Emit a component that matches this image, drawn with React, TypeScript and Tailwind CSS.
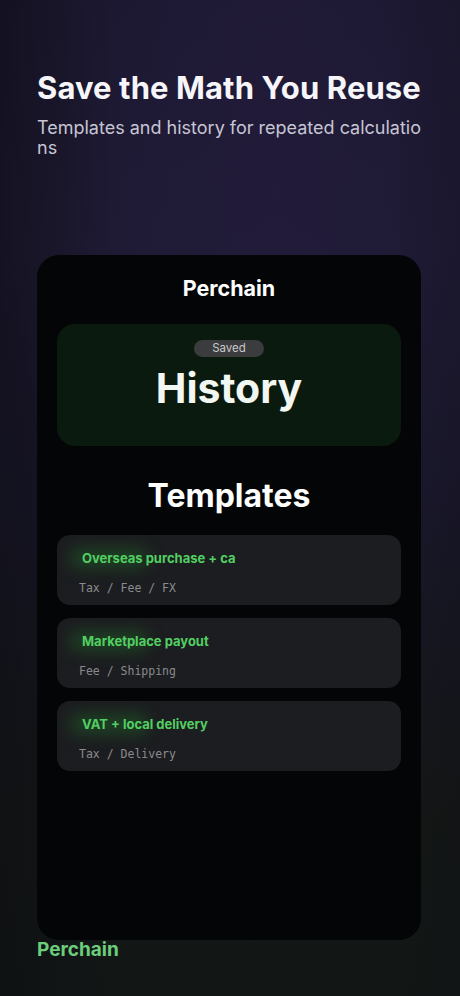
import React from "react";

type Template = { title: string; tags: string };

const templates: Template[] = [
  { title: "Overseas purchase + ca", tags: "Tax / Fee / FX" },
  { title: "Marketplace payout", tags: "Fee / Shipping" },
  { title: "VAT + local delivery", tags: "Tax / Delivery" },
];

function TemplateCard({ t }: { t: Template }) {
  return (
    <div className="relative h-[70px] overflow-hidden rounded-[13px] bg-[#1c1d20] px-[22px] pt-[14px]">
      {/* soft green glow behind the title */}
      <div className="absolute left-[12px] top-[13px] h-[20px] w-[80px] rounded-full bg-[#1f5226] opacity-70 blur-[8px]" />
      <div className="relative pl-[3px] text-[13px] font-bold leading-[18px] text-[#52cf62]">{t.title}</div>
      <div className="relative mt-[13px] font-['DejaVu_Sans_Mono',monospace] text-[11.5px] leading-[16px] text-[#8b8b8e]">
        {t.tags}
      </div>
    </div>
  );
}

export default function App() {
  return (
    <div className="relative h-[996px] w-full overflow-hidden bg-[linear-gradient(180deg,#1c1830_0%,#1e1a33_25%,#19172a_50%,#141716_82%,#121716_100%)] font-['Inter','Liberation_Sans',sans-serif]">
      <div className="pointer-events-none absolute inset-0 bg-[radial-gradient(ellipse_at_60%_15%,rgba(50,35,90,0.18),transparent_55%)]" />
      <div className="pointer-events-none absolute inset-0 bg-[linear-gradient(90deg,rgba(10,10,15,0.45)_0%,transparent_25%,transparent_85%,rgba(10,10,15,0.15)_100%)]" />

      <div className="relative flex flex-col px-[37px] pt-[70px]">
        <h1 className="text-[31px] font-bold leading-[36px] tracking-[0.1px] text-[#f6f5fa]">Save the Math You Reuse</h1>
        <p className="mt-[12px] w-[388px] break-all text-[18px] leading-[20px] text-[#c7c5d4]">
          Templates and history for repeated calculations
        </p>

        <div className="mt-[97px] flex h-[685px] w-[384px] flex-col items-center rounded-[22px] bg-[#040506] px-[20px]">
          <div className="mt-[21px] text-[21.5px] font-bold leading-[24px] text-white">Perchain</div>

          <div className="mt-[24px] flex h-[122px] w-full flex-col items-center rounded-[18px] bg-[#0b1a0f] pt-[16px]">
            <span className="flex h-[17px] w-[70px] items-center justify-center rounded-full bg-[#3b3c3d] text-[11.5px] leading-none text-[#c9c9c9]">
              Saved
            </span>
            <div className="mt-[7px] text-[41px] font-bold leading-[48px] text-[#f2f7f2]">History</div>
          </div>

          <div className="mt-[32px] text-[32px] font-bold leading-[36px] text-white">Templates</div>

          <div className="mt-[21px] flex w-full flex-col gap-[13px]">
            {templates.map((t) => (
              <TemplateCard key={t.title} t={t} />
            ))}
          </div>
        </div>

        <div className="mt-[-1px] text-[19px] font-bold leading-[22px] text-[#6ccd7b]">Perchain</div>
      </div>
    </div>
  );
}
